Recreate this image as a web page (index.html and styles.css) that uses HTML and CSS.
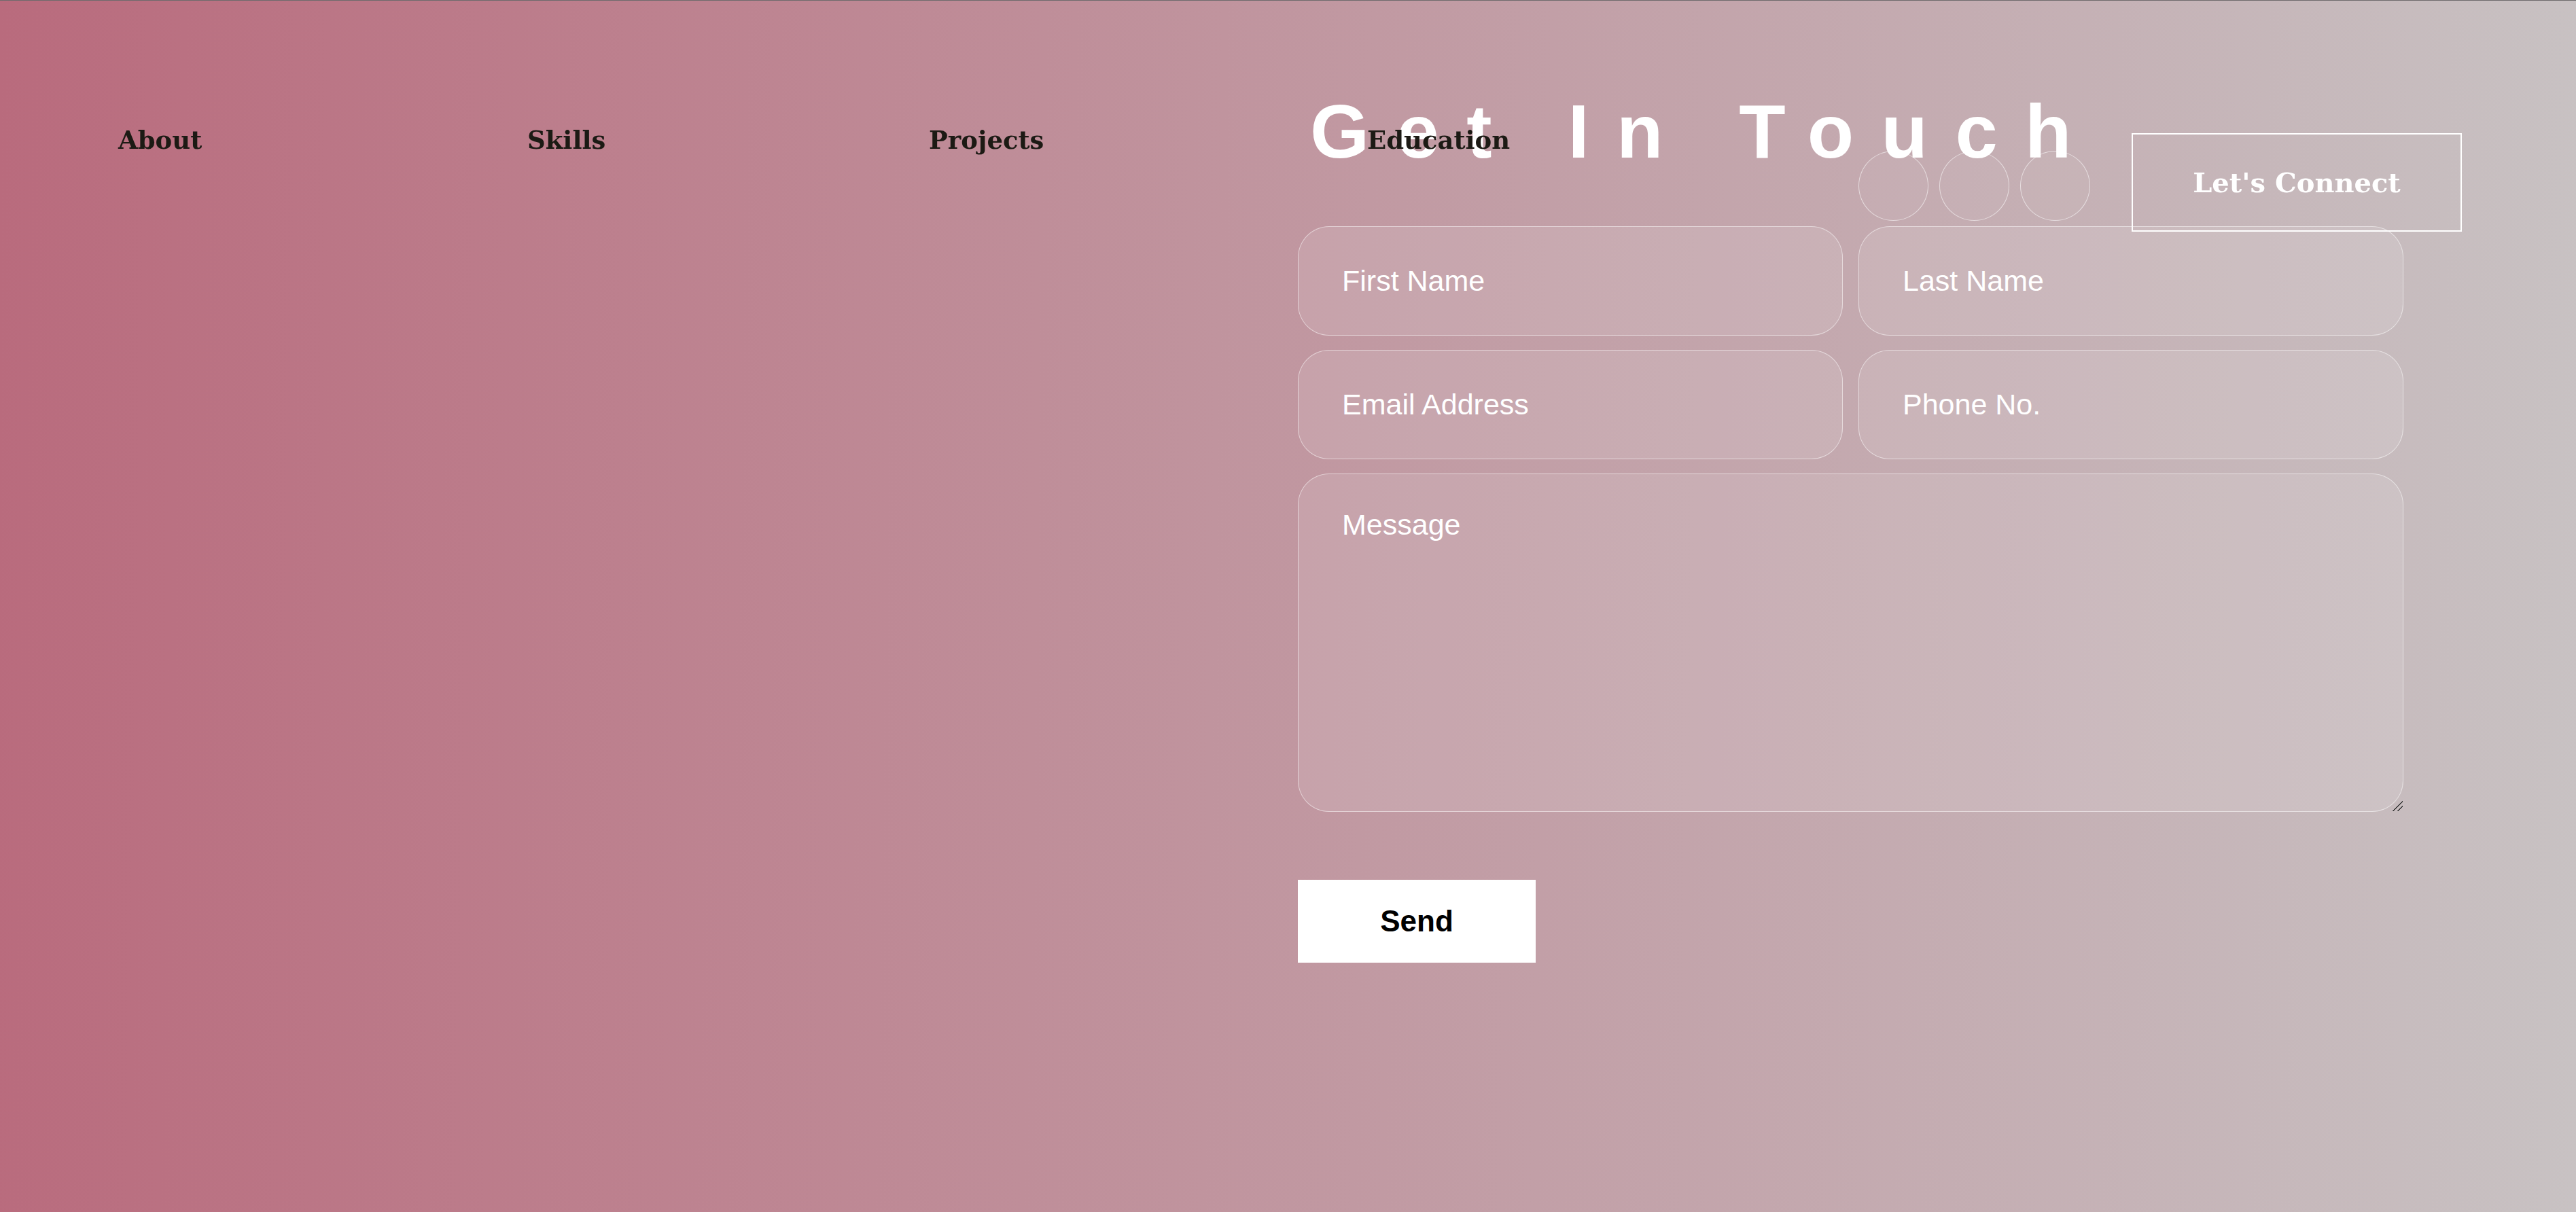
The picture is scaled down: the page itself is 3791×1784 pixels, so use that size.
FILE: index.html
```html
<!DOCTYPE html>
<html lang="en">
<head>
<meta charset="utf-8">
<title>Get In Touch</title>
<link rel="stylesheet" href="styles.css">
</head>
<body>
<nav class="navbar">
  <div class="nav-links">
    <a class="nav-link" href="#about">About</a>
    <a class="nav-link" href="#skills">Skills</a>
    <a class="nav-link" href="#projects">Projects</a>
    <a class="nav-link" href="#education">Education</a>
  </div>
  <div class="nav-right">
    <div class="social">
      <a class="social-icon" href="#"></a>
      <a class="social-icon" href="#"></a>
      <a class="social-icon" href="#"></a>
    </div>
    <button class="connect-btn" type="button">Let's Connect</button>
  </div>
</nav>

<section class="contact">
  <div class="contact-side"></div>
  <div class="contact-main">
    <h2 class="contact-title">Get In Touch</h2>
    <form class="contact-form">
      <input class="field" type="text" placeholder="First Name">
      <input class="field" type="text" placeholder="Last Name">
      <input class="field" type="email" placeholder="Email Address">
      <input class="field" type="tel" placeholder="Phone No.">
      <textarea class="field field-message" placeholder="Message"></textarea>
      <div class="form-actions">
        <button class="send-btn" type="submit">Send</button>
      </div>
    </form>
  </div>
</section>
</body>
</html>
```

FILE: styles.css
```css
html, body {
  margin: 0;
  padding: 0;
}

body {
  min-height: 1783px;
  border-top: 1px solid #6e6a6c;
  background: linear-gradient(91deg, #b96b7d 0%, #c8c2c3 100%);
  font-family: "Liberation Sans", Arial, sans-serif;
}

/* ---------- Navbar (fixed overlay) ---------- */
.navbar {
  position: fixed;
  top: 1px;
  left: 0;
  right: 0;
  z-index: 10;
  display: flex;
  justify-content: space-between;
  align-items: flex-start;
  padding: 0 168px 0 174px;
}

.nav-links {
  display: grid;
  grid-template-columns: 602px 591px 645px auto;
  margin-top: 187px;
}

.nav-link {
  font-family: "DejaVu Serif", Georgia, serif;
  font-weight: bold;
  font-size: 37px;
  line-height: 1;
  color: #1c1a14;
  text-decoration: none;
}

.nav-right {
  display: flex;
  align-items: flex-start;
  gap: 61px;
  margin-top: 195px;
}

.social {
  display: flex;
  gap: 16px;
  margin-top: 26px;
}

.social-icon {
  display: block;
  width: 101px;
  height: 101px;
  border-radius: 50%;
  border: 1px solid rgba(255, 255, 255, 0.55);
  background: rgba(255, 255, 255, 0.04);
}

.connect-btn {
  width: 486px;
  height: 145px;
  border: 2px solid #ffffff;
  background: transparent;
  color: #ffffff;
  font-family: "DejaVu Serif", Georgia, serif;
  font-weight: bold;
  font-size: 40px;
  padding: 0;
  margin: 0;
}

/* ---------- Contact ---------- */
.contact {
  display: grid;
  grid-template-columns: 1fr 1627px;
  padding: 126px 254px 0 0;
}

.contact-title {
  margin: 0 0 72px 0;
  padding-left: 18px;
  font-family: "Liberation Sans", Arial, sans-serif;
  font-weight: bold;
  font-size: 112px;
  line-height: 1.2;
  letter-spacing: 40.4px;
  color: #ffffff;
  white-space: nowrap;
}

.contact-form {
  display: grid;
  grid-template-columns: 1fr 1fr;
  column-gap: 23px;
  row-gap: 21px;
}

.field {
  box-sizing: border-box;
  width: 100%;
  height: 161px;
  margin: 0;
  padding: 0 64px;
  border: 1.5px solid rgba(255, 255, 255, 0.5);
  border-radius: 46px;
  background: rgba(255, 255, 255, 0.11);
  color: #ffffff;
  font-family: "Liberation Sans", Arial, sans-serif;
  font-size: 43px;
  outline: none;
}

.field::placeholder {
  color: #ffffff;
  opacity: 1;
}

.field-message {
  grid-column: 1 / -1;
  height: 498px;
  padding: 50px 64px;
  line-height: 1.15;
  resize: both;
}

.field-message::-webkit-resizer {
  width: 14px;
  height: 14px;
  background: linear-gradient(135deg,
    transparent 0%, transparent 48%,
    #3a3a3a 48%, #3a3a3a 56%,
    transparent 56%, transparent 72%,
    #3a3a3a 72%, #3a3a3a 80%,
    transparent 80%);
}

.form-actions {
  grid-column: 1 / -1;
  padding-top: 79px;
}

.send-btn {
  display: block;
  width: 350px;
  height: 122px;
  border: none;
  background: #ffffff;
  color: #000000;
  font-family: "Liberation Sans", Arial, sans-serif;
  font-weight: bold;
  font-size: 44px;
  padding: 0;
}
```
